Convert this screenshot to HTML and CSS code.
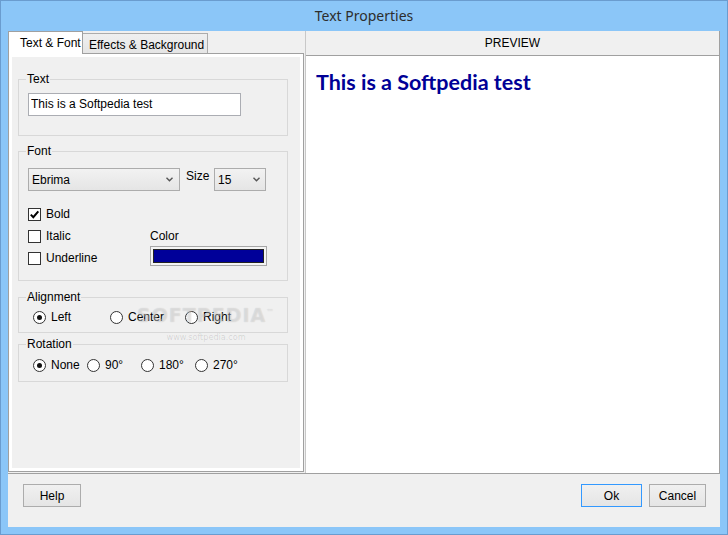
FILE: index.html
```html
<!DOCTYPE html>
<html lang="en">

<head>
    <meta charset="UTF-8">
    <title>Text Properties</title>
    <link rel="stylesheet" href="styles.css">
</head>

<body>
    <div class="window">
        <div class="titlebar">Text Properties</div>

        <div class="client">
            <div class="main">
                <div class="tabs">
                    <div class="tab-strip">
                        <div class="tab active">Text &amp; Font</div>
                        <div class="tab">Effects &amp; Background</div>
                    </div>

                    <div class="tab-body">
                        <fieldset class="group group-text">
                            <legend>Text</legend>
                            <input class="textbox" type="text" value="This is a Softpedia test">
                        </fieldset>

                        <fieldset class="group group-font">
                            <legend>Font</legend>
                            <div class="font-row">
                                <div class="combo combo-font">
                                    <span>Ebrima</span>
                                    <svg width="7" height="5" viewBox="0 0 7 5"><polyline points="0.5,0.8 3.5,3.8 6.5,0.8" fill="none" stroke="#555" stroke-width="1.4"/></svg>
                                </div>
                                <span class="size-label">Size</span>
                                <div class="combo combo-size">
                                    <span>15</span>
                                    <svg width="7" height="5" viewBox="0 0 7 5"><polyline points="0.5,0.8 3.5,3.8 6.5,0.8" fill="none" stroke="#555" stroke-width="1.4"/></svg>
                                </div>
                            </div>
                            <div class="font-lower">
                                <div class="styles">
                                    <label class="option"><span class="check"><svg width="11" height="11" viewBox="0 0 11 11"><polyline points="1.8,5.6 4.3,8.2 9.3,2.4" fill="none" stroke="#000" stroke-width="2"/></svg></span>Bold</label>
                                    <label class="option"><span class="check"></span>Italic</label>
                                    <label class="option"><span class="check"></span>Underline</label>
                                </div>
                                <div class="color">
                                    <div class="color-label">Color</div>
                                    <div class="swatch"><div class="swatch-fill"></div></div>
                                </div>
                            </div>
                        </fieldset>

                        <fieldset class="group group-align">
                            <legend>Alignment</legend>
                            <div class="radios radios-align">
                                <label class="option"><span class="radio on"></span>Left</label>
                                <label class="option"><span class="radio"></span>Center</label>
                                <label class="option"><span class="radio"></span>Right</label>
                            </div>
                        </fieldset>

                        <fieldset class="group group-rot">
                            <legend>Rotation</legend>
                            <div class="radios radios-rot">
                                <label class="option"><span class="radio on"></span>None</label>
                                <label class="option"><span class="radio"></span>90°</label>
                                <label class="option"><span class="radio"></span>180°</label>
                                <label class="option"><span class="radio"></span>270°</label>
                            </div>
                        </fieldset>
                    </div>
                </div>

                <div class="preview">
                    <div class="preview-head">PREVIEW</div>
                    <div class="preview-canvas">
                        <p class="sample">This is a Softpedia test</p>
                    </div>
                </div>
            </div>

            <div class="buttons">
                <button class="btn btn-help">Help</button>
                <div class="spacer"></div>
                <button class="btn btn-ok">Ok</button>
                <button class="btn btn-cancel">Cancel</button>
            </div>
        </div>

        <!-- site watermark sitting on top of the dialog -->
        <div class="watermark">
            <div class="wm-big">SOFTPEDIA<sup>™</sup></div>
            <div class="wm-small">www.softpedia.com</div>
        </div>
    </div>
</body>

</html>
```

FILE: styles.css
```css
* {
    box-sizing: border-box;
}

body {
    margin: 0;
    font-family: "Liberation Sans", Arial, sans-serif;
    font-size: 12px;
    color: #000;
}

.window {
    position: relative;
    width: 728px;
    height: 535px;
    display: flex;
    flex-direction: column;
    background: #8bc6f8;
    border: 1px solid #6a9ccf;
    padding: 0 7px 7px;
}

.titlebar {
    height: 30px;
    line-height: 30px;
    text-align: center;
    font-family: "Noto Sans", sans-serif;
    font-size: 14px;
    color: #2d2d2d;
}

.client {
    flex: 1;
    display: flex;
    flex-direction: column;
    background: #f0f0f0;
}

.main {
    flex: 1;
    display: flex;
}

/* left tab pane */
.tabs {
    width: 296px;
    display: flex;
    flex-direction: column;
}

.tab-strip {
    height: 22px;
    display: flex;
    align-items: flex-end;
    position: relative;
    z-index: 1;
}

.tab {
    height: 20px;
    width: 125px;
    padding: 2px 0 0 6px;
    line-height: 18px;
    border: 1px solid #acacac;
    border-bottom: none;
    border-left: none;
    background: linear-gradient(#f0f0f0, #e5e5e5);
}

.tab.active {
    width: 75px;
    height: 23px;
    margin-bottom: -1px;
    padding: 0 0 0 11px;
    line-height: 23px;
    background: #fff;
    border: 1px solid #a0a0a0;
    border-bottom: none;
}

.tab-body {
    flex: 1;
    margin-bottom: 1px;
    display: flex;
    flex-direction: column;
    align-items: flex-start;
    padding: 18px 15px 0 9px;
    border: 1px solid #a0a0a0;
    box-shadow: inset 0 0 0 3px #fff;
    background: #f0f0f0;
}

.group {
    width: 270px;
    min-width: 0;
    margin: 0;
    padding: 0 0 0 9px;
    border: 1px solid #d8d8d8;
}

.group legend {
    padding: 0 1px;
    margin-left: -2px;
    line-height: 14px;
}

.group-text {
    padding-top: 7px;
    padding-bottom: 19px;
}

.group-font {
    margin-top: 8px;
    padding-top: 10px;
    padding-bottom: 11px;
}

.group-align {
    margin-top: 9px;
    padding-top: 6px;
    padding-bottom: 8px;
}

.group-rot {
    margin-top: 4px;
    padding-top: 7px;
    padding-bottom: 9px;
}

.textbox {
    display: block;
    width: 213px;
    height: 23px;
    margin: 0;
    padding: 0 2px 2px;
    font: inherit;
    color: #000;
    background: #fff;
    border: 1px solid #abadb3;
}

.font-row {
    display: flex;
    align-items: flex-start;
}

.combo {
    height: 23px;
    display: flex;
    align-items: center;
    justify-content: space-between;
    padding: 0 6px 0 3px;
    border: 1px solid #acacac;
    background: linear-gradient(#f2f2f2, #e5e5e5);
}

.combo-font {
    width: 152px;
}

.combo-size {
    width: 52px;
    padding-right: 5px;
}

.size-label {
    width: 28px;
    margin: 1px 0 0 6px;
    line-height: 14px;
}

.font-lower {
    display: grid;
    grid-template-columns: 122px 117px;
    margin-top: 12px;
}

.option {
    display: flex;
    align-items: center;
    gap: 5px;
    white-space: nowrap;
}

.styles .option {
    height: 22px;
}

.check {
    width: 13px;
    height: 13px;
    display: flex;
    align-items: center;
    justify-content: center;
    border: 1px solid #333;
    background: #fff;
}

.color-label {
    margin-top: 26px;
    line-height: 14px;
}

.swatch {
    width: 117px;
    height: 20px;
    margin-top: 3px;
    padding: 2px;
    border: 1px solid #a6a6a6;
    background: #f4f4f4;
}

.swatch-fill {
    height: 100%;
    border: 1px solid #222;
    background: #000099;
}

.radios {
    display: grid;
    padding-left: 5px;
}

.radios .option {
    height: 14px;
}

.radios-align {
    grid-template-columns: 77px 75px auto;
}

.radios-rot {
    grid-template-columns: 54px 54px 54px auto;
}

.radio {
    width: 13px;
    height: 13px;
    display: flex;
    align-items: center;
    justify-content: center;
    border: 1px solid #333;
    border-radius: 50%;
    background: #fff;
}

.radio.on::after {
    content: "";
    width: 5px;
    height: 5px;
    border-radius: 50%;
    background: #111;
}

/* preview pane */
.preview {
    flex: 1;
    margin-left: 1px;
    display: flex;
    flex-direction: column;
    border-left: 1px solid #c8c8c8;
    border-right: 1px solid #a0a0a0;
}

.preview-head {
    height: 25px;
    padding-top: 1px;
    line-height: 23px;
    text-align: center;
    border-bottom: 1px solid #a0a0a0;
}

.preview-canvas {
    flex: 1;
    padding: 13px 10px;
    background: #fff;
}

.sample {
    margin: 0;
    font-family: Lato, "Noto Sans", sans-serif;
    font-weight: bold;
    font-size: 21.5px;
    line-height: 26px;
    color: #000096;
}

/* bottom buttons */
.buttons {
    height: 54px;
    display: flex;
    align-items: flex-start;
    gap: 7px;
    padding: 10px 14px 0 15px;
    border-top: 1px solid #a0a0a0;
}

.spacer {
    flex: 1;
}

.btn {
    height: 23px;
    padding: 0;
    font: inherit;
    color: #000;
    border: 1px solid #acacac;
    background: linear-gradient(#f0f0f0, #e5e5e5);
}

.btn-help {
    width: 58px;
}

.btn-ok {
    width: 61px;
    border-color: #3399ff;
}

.btn-cancel {
    width: 57px;
}

.watermark {
    position: absolute;
    left: 136px;
    top: 303px;
    text-align: center;
    pointer-events: none;
}

.wm-big {
    font-family: "DejaVu Sans", sans-serif;
    font-weight: bold;
    font-size: 19px;
    letter-spacing: 1px;
    color: rgba(255, 255, 255, 0.35);
    text-shadow: 0 0 1px rgba(0, 0, 0, 0.18);
}

.wm-big sup {
    font-size: 8px;
    font-weight: normal;
}

.wm-small {
    margin-top: 6px;
    font-family: "DejaVu Sans Condensed", sans-serif;
    font-size: 9px;
    color: rgba(0, 0, 0, 0.13);
}
```
